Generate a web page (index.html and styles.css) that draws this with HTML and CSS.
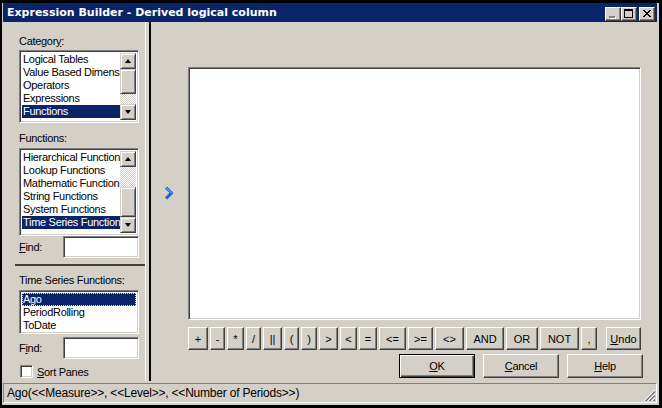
FILE: index.html
```html
<!DOCTYPE html>
<html lang="en">
<head>
    <meta charset="UTF-8">
    <title>Expression Builder - Derived logical column</title>
    <link rel="stylesheet" href="styles.css">
</head>
<body>

<div class="window">
    <!-- Title bar -->
    <div class="titlebar">
        <span class="title">Expression Builder - Derived logical column</span>
        <div class="caption-buttons">
            <div class="cap-btn">
                <svg width="14" height="12" viewBox="0 0 14 12">
                    <rect x="4" y="9" width="6" height="2" fill="#fff"/>
                    <rect x="3" y="8" width="6" height="2" fill="#808080"/>
                </svg>
            </div>
            <div class="cap-btn">
                <svg width="14" height="12" viewBox="0 0 14 12">
                    <rect x="2.5" y="1.5" width="8" height="8" fill="none" stroke="#000"/>
                    <rect x="2" y="1" width="9" height="2" fill="#000"/>
                </svg>
            </div>
            <div class="cap-btn close">
                <svg width="14" height="12" viewBox="0 0 14 12">
                    <path d="M3 2 L10 9 M4 2 L11 9 M10 2 L3 9 M11 2 L4 9" stroke="#000" stroke-width="1"/>
                </svg>
            </div>
        </div>
    </div>

    <div class="client">
        <div class="main">
            <!-- Left side: category / function pickers -->
            <div class="left-side">
                <div class="pane-top">
                    <div class="field-label">Categor<u>y</u>:</div>
                    <div class="listbox list-category">
                        <ul class="items">
                            <li>Logical Tables</li>
                            <li>Value Based Dimensions</li>
                            <li>Operators</li>
                            <li>Expressions</li>
                            <li class="selected">Functions</li>
                            <li>Constants</li>
                        </ul>
                        <div class="scrollbar">
                            <div class="sb-btn up"></div>
                            <div class="sb-thumb thumb-category"></div>
                            <div class="sb-track"></div>
                            <div class="sb-btn down"></div>
                        </div>
                    </div>

                    <div class="field-label spaced">Functions:</div>
                    <div class="listbox list-functions">
                        <ul class="items">
                            <li>Hierarchical Functions</li>
                            <li>Lookup Functions</li>
                            <li>Mathematic Functions</li>
                            <li>String Functions</li>
                            <li>System Functions</li>
                            <li class="selected">Time Series Functions</li>
                        </ul>
                        <div class="scrollbar">
                            <div class="sb-btn up"></div>
                            <div class="sb-track"></div>
                            <div class="sb-thumb thumb-functions"></div>
                            <div class="sb-btn down"></div>
                        </div>
                    </div>

                    <div class="find-row">
                        <span><u>F</u>ind:</span>
                        <div class="textbox"></div>
                    </div>
                </div>

                <div class="pane-bottom">
                    <div class="field-label">Time Series Functions:</div>
                    <div class="listbox list-series">
                        <ul class="items">
                            <li class="selected focused">Ago</li>
                            <li>PeriodRolling</li>
                            <li>ToDate</li>
                        </ul>
                    </div>

                    <div class="find-row second">
                        <span>F<u>i</u>nd:</span>
                        <div class="textbox"></div>
                    </div>

                    <div class="check-row">
                        <div class="checkbox"></div>
                        <span><u>S</u>ort Panes</span>
                    </div>
                </div>
            </div>

            <!-- Right side: expression editor -->
            <div class="right-side">
                <div class="editor-row">
                    <div class="arrow-col">
                        <svg width="11" height="14" viewBox="0 0 11 14">
                            <path d="M2 1.5 L7.5 7 L2 12.5" fill="none" stroke="#1d64c8" stroke-width="3"/>
                            <path d="M2 1.5 L7.5 7" fill="none" stroke="#8cc4f8" stroke-width="1"/>
                        </svg>
                    </div>
                    <div class="editor"></div>
                </div>

                <div class="operators">
                    <div class="btn op w20">+</div>
                    <div class="btn op w15">-</div>
                    <div class="btn op w17">*</div>
                    <div class="btn op w15">/</div>
                    <div class="btn op w19">||</div>
                    <div class="btn op w15">(</div>
                    <div class="btn op w16">)</div>
                    <div class="btn op w19">&gt;</div>
                    <div class="btn op w17">&lt;</div>
                    <div class="btn op w18">=</div>
                    <div class="btn op w27">&lt;=</div>
                    <div class="btn op w25">&gt;=</div>
                    <div class="btn op w29">&lt;&gt;</div>
                    <div class="btn op w38">AND</div>
                    <div class="btn op w32">OR</div>
                    <div class="btn op w39">NOT</div>
                    <div class="btn op w16">,</div>
                    <div class="btn op undo"><u>U</u>ndo</div>
                </div>

                <div class="dialog-buttons">
                    <div class="btn dlg default"><u>O</u>K</div>
                    <div class="btn dlg"><u>C</u>ancel</div>
                    <div class="btn dlg"><u>H</u>elp</div>
                </div>
            </div>
        </div>

        <!-- Status bar -->
        <div class="statusbar">
            <span>Ago(&lt;&lt;Measure&gt;&gt;, &lt;&lt;Level&gt;&gt;, &lt;&lt;Number of Periods&gt;&gt;)</span>
            <svg class="grip" width="12" height="12" viewBox="0 0 12 12">
                <path d="M11 1 L1 11 M11 5 L5 11 M11 9 L9 11" stroke="#808080" stroke-width="1"/>
                <path d="M11 2 L2 11 M11 6 L6 11 M11 10 L10 11" stroke="#808080" stroke-width="1"/>
                <path d="M11 0 L0 11 M11 4 L4 11 M11 8 L8 11" stroke="#fff" stroke-width="1"/>
            </svg>
        </div>
    </div>
</div>

</body>
</html>
```

FILE: styles.css
```css
* {
    box-sizing: border-box;
    margin: 0;
    padding: 0;
}

body {
    font-family: "Liberation Sans", Arial, sans-serif;
    font-size: 11px;
    letter-spacing: -0.3px;
    color: #000;
    background: #000;
    width: 662px;
    height: 408px;
    overflow: hidden;
}

ul {
    list-style: none;
}

.window {
    width: 662px;
    height: 408px;
    background: #d4d0c8;
    border: 3px solid #000;
    border-left-width: 2px;
    padding: 0 2px 2px 1px;
    display: flex;
    flex-direction: column;
}

/* Title bar */
.titlebar {
    height: 19px;
    background: #0a246a;
    color: #fff;
    display: flex;
    align-items: center;
    padding: 0 2px 0 4px;
}

.title {
    font-family: "DejaVu Sans", Verdana, sans-serif;
    font-weight: bold;
    font-size: 11px;
    letter-spacing: 0;
    white-space: nowrap;
}

.caption-buttons {
    margin-left: auto;
    display: flex;
    align-self: flex-end;
    margin-bottom: 1px;
}

.cap-btn {
    width: 16px;
    height: 14px;
    background: #d4d0c8;
    border: 1px solid;
    border-color: #fff #404040 #404040 #fff;
    box-shadow: inset -1px -1px #808080;
    display: flex;
}

.cap-btn.close {
    margin-left: 2px;
}

/* Client area */
.client {
    flex: 1;
    display: flex;
    flex-direction: column;
}

.main {
    flex: 1;
    display: flex;
}

/* Left Side */
.left-side {
    width: 143px;
    flex-shrink: 0;
    border-right: 1px solid #fff;
    display: flex;
    flex-direction: column;
}

.pane-top {
    height: 242px;
    padding: 13px 0 0 16px;
}

.pane-bottom {
    flex: 1;
    margin-left: 12px;
    border-top: 2px solid #404040;
    padding: 8px 0 0 4px;
}

.field-label {
    height: 13px;
    line-height: 13px;
    margin-bottom: 2px;
    white-space: nowrap;
}

.field-label.spaced {
    margin-top: 9px;
    margin-bottom: 3px;
}

.pane-bottom .field-label {
    margin-bottom: 3px;
}

.listbox,
.textbox,
.checkbox,
.editor {
    background: #fff;
    border: 1px solid;
    border-color: #808080 #fff #fff #808080;
    box-shadow: inset 1px 1px #404040, inset -1px -1px #d4d0c8;
}

.listbox {
    width: 120px;
    display: flex;
    padding: 2px;
    overflow: hidden;
}

.list-category {
    height: 73px;
}

.list-functions {
    height: 88px;
}

.list-series {
    height: 44px;
}

.items {
    flex: 1;
    min-width: 0;
    overflow: hidden;
}

.items li {
    height: 13px;
    line-height: 12px;
    padding-left: 1px;
    white-space: nowrap;
    overflow: hidden;
}

.items li.selected {
    background: #0a246a;
    color: #fff;
}

.items li.focused {
    outline: 1px dotted #e8e0a0;
    outline-offset: -1px;
}

/* Scrollbars */
.scrollbar {
    width: 16px;
    flex-shrink: 0;
    display: flex;
    flex-direction: column;
}

.sb-btn,
.sb-thumb {
    background: #d4d0c8;
    border: 1px solid;
    border-color: #d4d0c8 #404040 #404040 #d4d0c8;
    box-shadow: inset 1px 1px #fff, inset -1px -1px #808080;
}

.sb-btn {
    height: 16px;
    display: flex;
    align-items: center;
    justify-content: center;
}

.sb-btn::after {
    content: "";
    border: 4px solid transparent;
    border-left-width: 3.5px;
    border-right-width: 3.5px;
}

.sb-btn.up::after {
    border-bottom-color: #000;
    border-top-width: 0;
}

.sb-btn.down::after {
    border-top-color: #000;
    border-bottom-width: 0;
}

.sb-track {
    flex: 1;
    background-color: #fff;
    background-image: conic-gradient(#fff 25%, #d4d0c8 0 50%, #fff 0 75%, #d4d0c8 0);
    background-size: 2px 2px;
}

.thumb-category {
    height: 25px;
}

.thumb-functions {
    height: 30px;
}

/* Find rows */
.find-row {
    display: flex;
    align-items: center;
    width: 120px;
}

.find-row.second {
    margin-top: 3px;
}

.find-row .textbox {
    margin-left: auto;
    width: 76px;
    height: 22px;
}

.check-row {
    display: flex;
    align-items: center;
    gap: 4px;
    margin-top: 6px;
    margin-left: 1px;
}

.checkbox {
    width: 13px;
    height: 13px;
}

/* Right Side (editor) */
.right-side {
    flex: 1;
    min-width: 0;
    margin-left: 3px;
    border-left: 2px solid #000;
    padding: 45px 16px 3px 0;
    display: flex;
    flex-direction: column;
}

.editor-row {
    flex: 1;
    display: flex;
}

.arrow-col {
    width: 37px;
    flex-shrink: 0;
    display: flex;
    align-items: center;
    padding: 0 0 2px 13px;
}

.editor {
    flex: 1;
}

.btn {
    background: #d4d0c8;
    border: 1px solid;
    border-color: #fff #404040 #404040 #fff;
    box-shadow: inset -1px -1px #808080;
    display: flex;
    align-items: center;
    justify-content: center;
    white-space: nowrap;
}

.operators {
    display: flex;
    gap: 2px;
    margin: 7px 0 0 37px;
    height: 23px;
}

.op {
    flex-shrink: 0;
    letter-spacing: 0;
}

.w15 { width: 15px; }
.w16 { width: 16px; }
.w17 { width: 17px; }
.w18 { width: 18px; }
.w19 { width: 19px; }
.w20 { width: 20px; }
.w25 { width: 25px; }
.w27 { width: 27px; }
.w29 { width: 29px; }
.w32 { width: 32px; }
.w38 { width: 38px; }
.w39 { width: 39px; }

.op.undo {
    margin-left: auto;
    width: 35px;
}

.dialog-buttons {
    display: flex;
    justify-content: flex-end;
    gap: 8px;
    margin-top: 4px;
    margin-right: -2px;
}

.dlg {
    width: 76px;
    height: 24px;
}

.dlg.default {
    border: 1px solid #000;
    box-shadow: inset 1px 1px #fff, inset -1px -1px #404040, inset -2px -2px #808080;
}

/* Status bar */
.statusbar {
    height: 20px;
    margin-top: 2px;
    border: 1px solid;
    border-color: #808080 #fff #fff #808080;
    padding-left: 3px;
    display: flex;
    align-items: center;
    font-size: 12px;
    letter-spacing: -0.2px;
    white-space: nowrap;
    position: relative;
}

.grip {
    position: absolute;
    right: 0;
    bottom: 0;
}
```
